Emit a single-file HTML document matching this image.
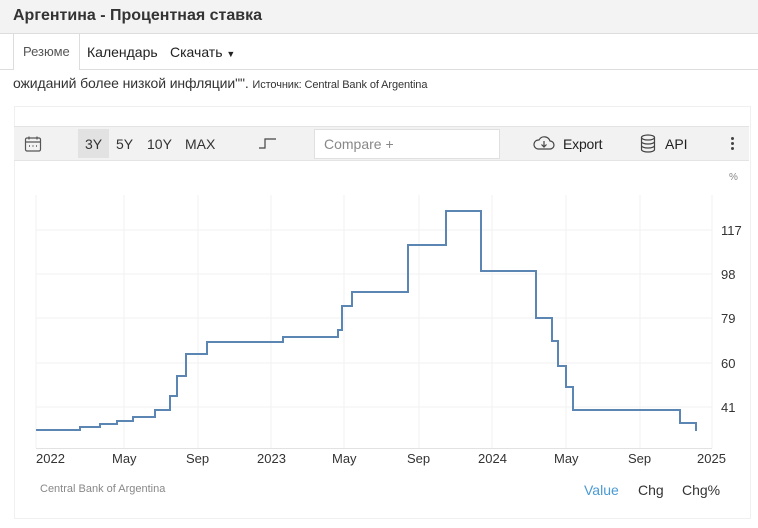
<!DOCTYPE html><html><head><meta charset="utf-8"><style>
body{margin:0;width:758px;height:528px;background:#fff;font-family:"Liberation Sans",sans-serif;position:relative;overflow:hidden;color:#333}
.a{position:absolute;white-space:nowrap}
</style></head><body>
<div class="a" style="left:0;top:0;width:758px;height:33px;background:#f3f3f3;border-bottom:1px solid #ddd"></div>
<div class="a" style="left:13px;top:7px;font-size:16px;font-weight:bold;color:#333">Аргентина - Процентная ставка</div>
<div class="a" style="left:0;top:69px;width:758px;height:1px;background:#ddd"></div>
<div class="a" style="left:13px;top:34px;width:65px;height:36px;background:#fff;border-left:1px solid #ddd;border-right:1px solid #ddd"></div>
<div class="a" style="left:23px;top:44px;font-size:13px;color:#555">Резюме</div>
<div class="a" style="left:87px;top:44px;font-size:14px;color:#222">Календарь</div>
<div class="a" style="left:170px;top:44px;font-size:14px;color:#222">Скачать <span style="font-size:9px">▼</span></div>
<div class="a" style="left:13px;top:75px;font-size:14px;color:#333;letter-spacing:-0.1px">ожиданий более низкой инфляции"". <span style="font-size:11px">Источник: Central Bank of Argentina</span></div>
<div class="a" style="left:14px;top:106px;width:735px;height:411px;border:1px solid #f0f0f0"></div>
<div class="a" style="left:14px;top:126px;width:735px;height:33px;background:#f2f2f2;border-top:1px solid #e4e4e4;border-bottom:1px solid #e4e4e4"></div>
<svg class="a" style="left:24px;top:135px" width="18" height="18" viewBox="0 0 18 18" fill="none" stroke="#555" stroke-width="1.2"><rect x="1.5" y="3" width="15" height="13" rx="1.5"/><path d="M1.5 7h15M5 1.5v3M13 1.5v3"/><path d="M5 11h1M8.5 11h1M12 11h1" stroke-width="1.5"/></svg>
<div class="a" style="left:78px;top:129px;width:31px;height:29px;background:#e2e2e2"></div>
<div class="a" style="left:85px;top:136px;font-size:14px;color:#333">3Y</div>
<div class="a" style="left:116px;top:136px;font-size:14px;color:#333">5Y</div>
<div class="a" style="left:147px;top:136px;font-size:14px;color:#333">10Y</div>
<div class="a" style="left:185px;top:136px;font-size:14px;color:#333">MAX</div>
<svg class="a" style="left:258px;top:136px" width="20" height="14"><path d="M1 12h6V3h11" fill="none" stroke="#444" stroke-width="1.2"/></svg>
<div class="a" style="left:314px;top:129px;width:184px;height:28px;background:#fff;border:1px solid #e0e0e0"></div>
<div class="a" style="left:324px;top:136px;font-size:14px;color:#888">Compare +</div>
<svg class="a" style="left:533px;top:134px" width="22" height="18" viewBox="0 0 22 18" fill="none" stroke="#444" stroke-width="1.2"><path d="M5 15h12a4 4 0 0 0 0-8 6 6 0 0 0-11-1 4.5 4.5 0 0 0-1 9z"/><path d="M11 7v6M8.5 10.5 11 13l2.5-2.5"/></svg>
<div class="a" style="left:563px;top:136px;font-size:14px;color:#222;letter-spacing:-0.2px">Export</div>
<svg class="a" style="left:640px;top:134px" width="16" height="19" viewBox="0 0 16 19" fill="none" stroke="#444" stroke-width="1.2"><ellipse cx="8" cy="3.5" rx="6.5" ry="2.5"/><path d="M1.5 3.5v12c0 1.4 2.9 2.5 6.5 2.5s6.5-1.1 6.5-2.5v-12M1.5 7.5c0 1.4 2.9 2.5 6.5 2.5s6.5-1.1 6.5-2.5M1.5 11.5c0 1.4 2.9 2.5 6.5 2.5s6.5-1.1 6.5-2.5"/></svg>
<div class="a" style="left:665px;top:136px;font-size:14px;color:#222">API</div>
<div class="a" style="left:731px;top:137px;width:3px;height:3px;border-radius:2px;background:#444;box-shadow:0 5px 0 #444,0 10px 0 #444"></div>
<div class="a" style="left:729px;top:172px;font-size:10px;color:#888">%</div>
<svg class="a" style="left:0;top:0" width="758" height="528">
<g stroke="#f2f2f2" stroke-width="1">
<path d="M36 195V448M124 195V448M198 195V448M271 195V448M344 195V448M419 195V448M492 195V448M566 195V448M640 195V448M712 195V448"/>
<path d="M36 230H712M36 274H712M36 318H712M36 363H712M36 407H712"/>
</g>
<path d="M36 448.5H712" stroke="#e2e2e2"/>
<path d="M36 430H80V427H100V424H117V421H133V417H155V410H170V396H177V376H186V354H207V342H283V337H338V330H342V306H352V292H408V245H446V211H481V271H536V318H552V341H558V366H566V387H573V410H680V423H696V431" fill="none" stroke="#5b86b3" stroke-width="2"/>
<g font-size="13" fill="#333" font-family="Liberation Sans">
<text x="721" y="235">117</text><text x="721" y="279">98</text><text x="721" y="323">79</text><text x="721" y="368">60</text><text x="721" y="412">41</text>
<text x="36" y="463">2022</text><text x="112" y="463">May</text><text x="186" y="463">Sep</text><text x="257" y="463">2023</text><text x="332" y="463">May</text><text x="407" y="463">Sep</text><text x="478" y="463">2024</text><text x="554" y="463">May</text><text x="628" y="463">Sep</text><text x="697" y="463">2025</text>
</g>
</svg>
<div class="a" style="left:40px;top:483px;font-size:11px;color:#888">Central Bank of Argentina</div>
<div class="a" style="left:584px;top:482px;font-size:14px;color:#4a9ad4">Value</div>
<div class="a" style="left:638px;top:482px;font-size:14px;color:#333">Chg</div>
<div class="a" style="left:682px;top:482px;font-size:14px;color:#333">Chg%</div>
</body></html>
